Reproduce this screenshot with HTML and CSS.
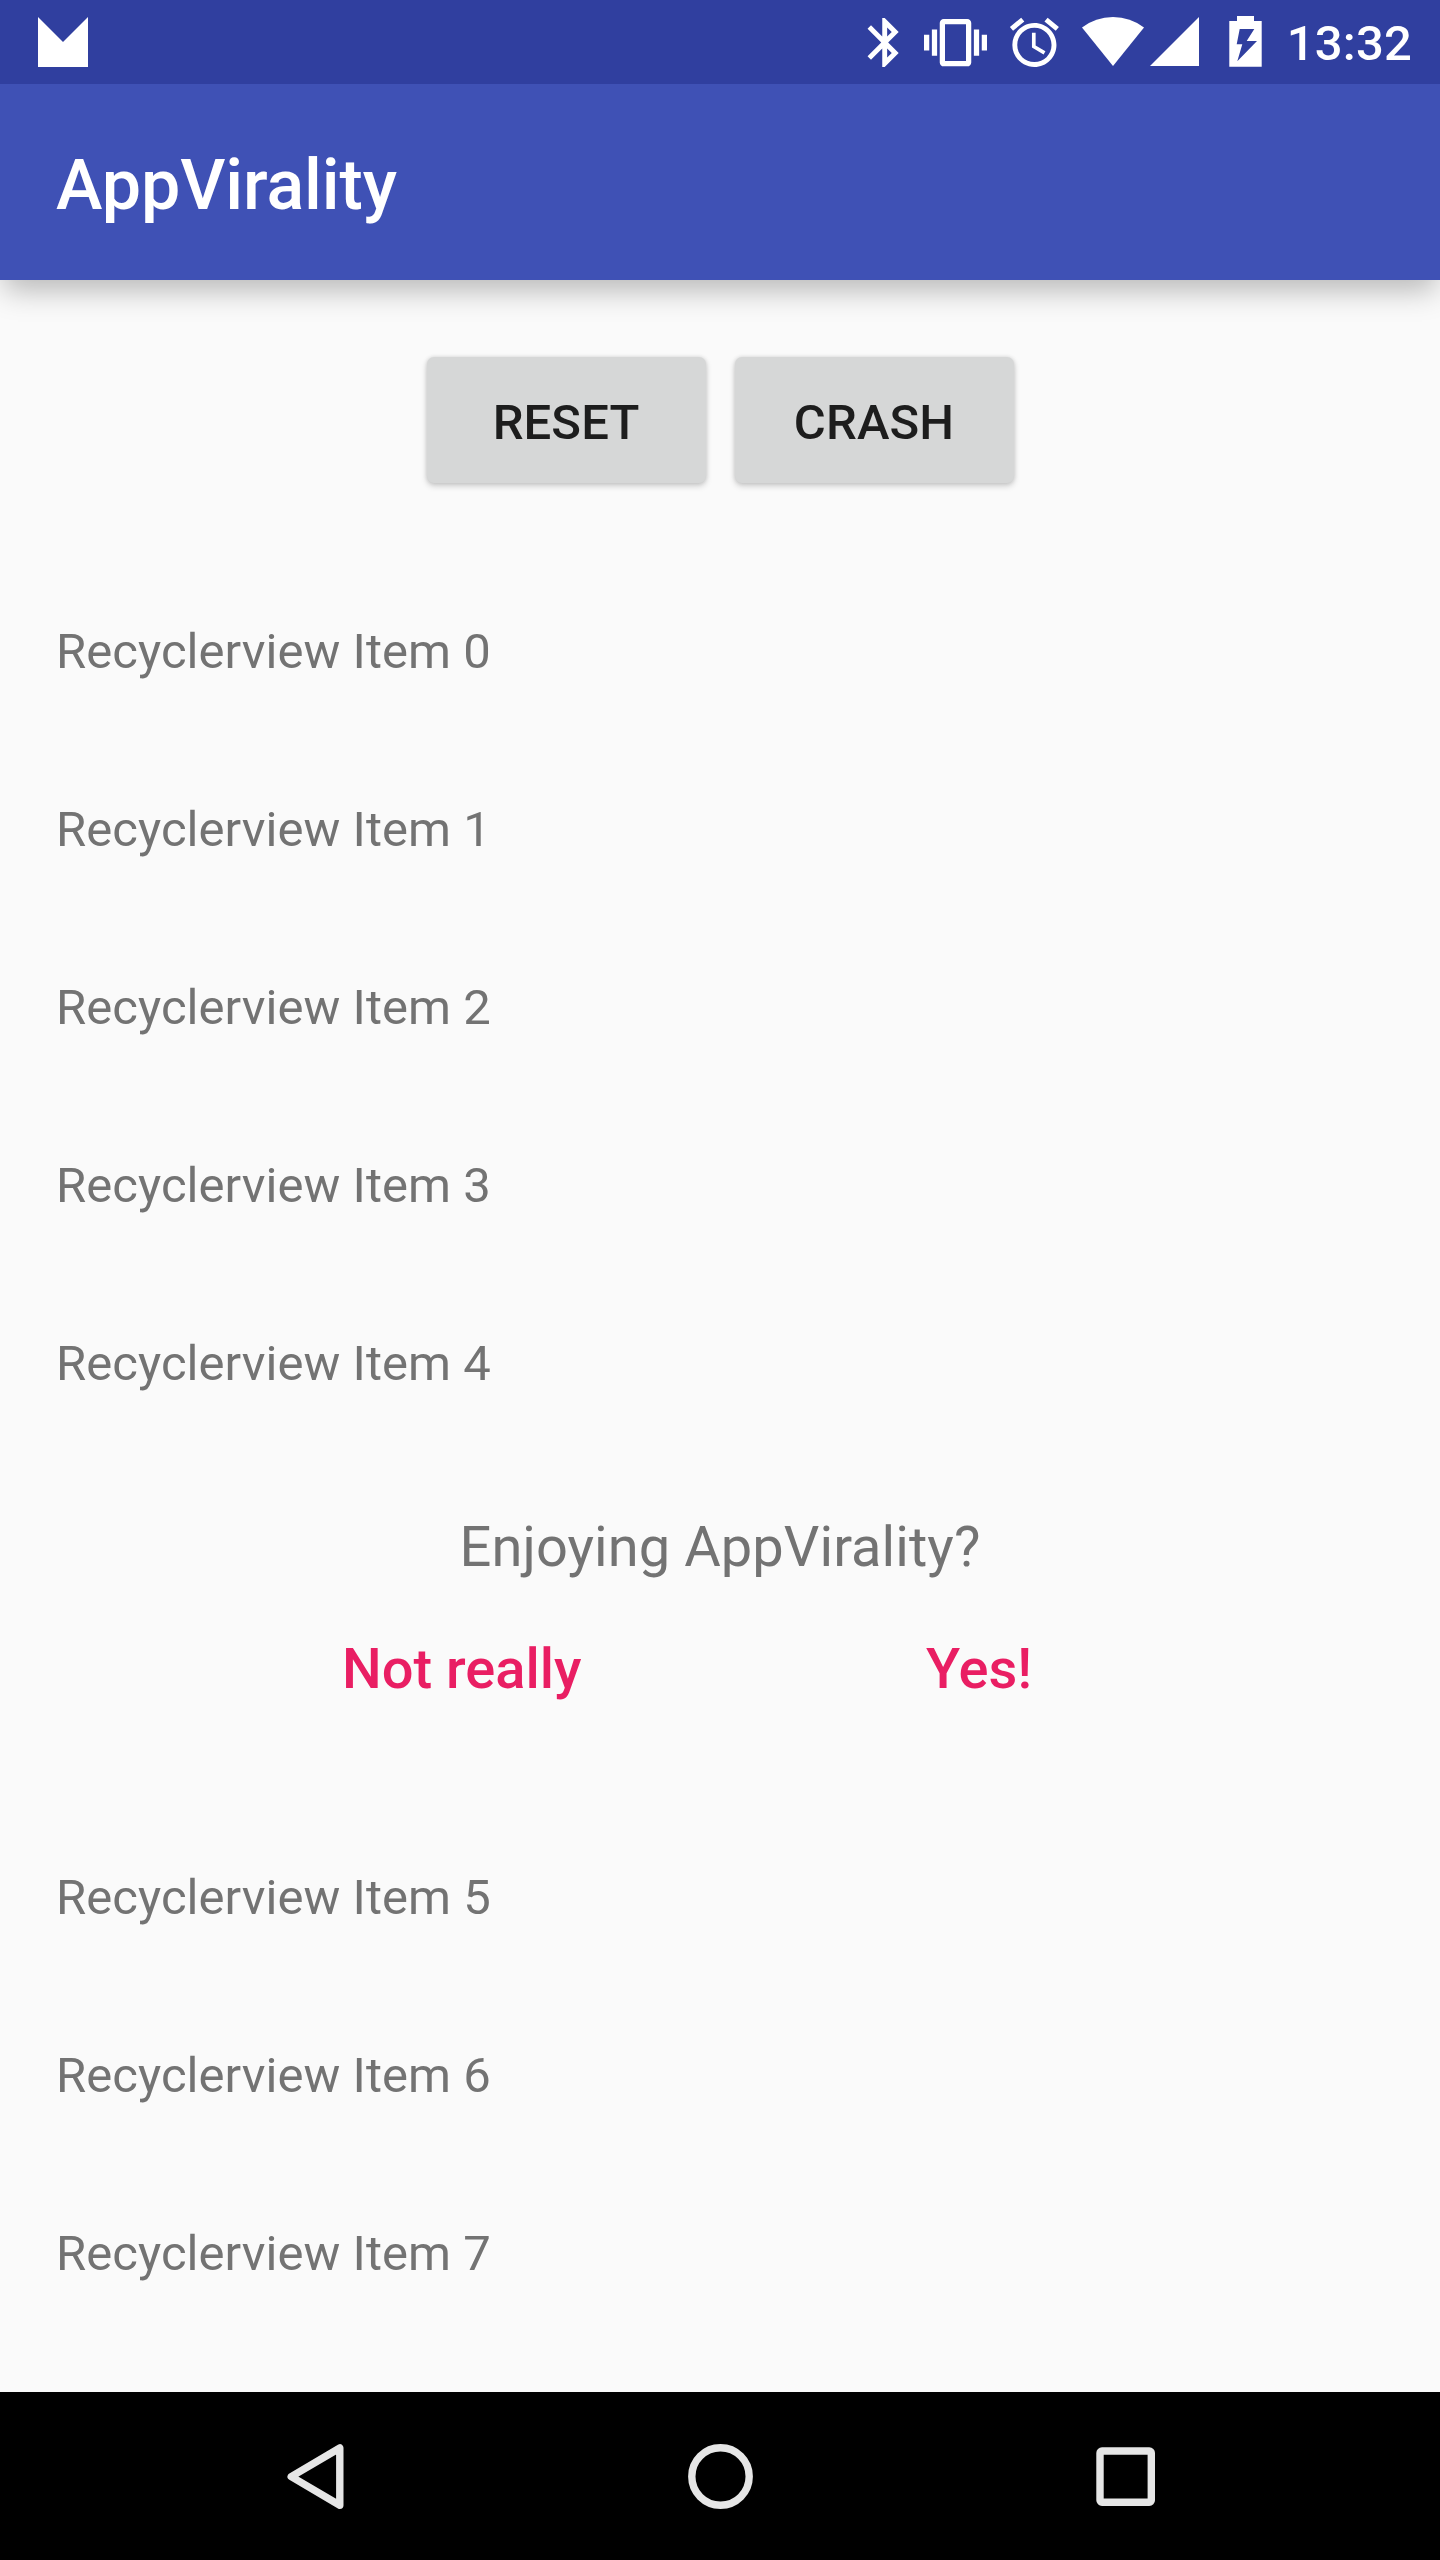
FILE: index.html
```html
<!DOCTYPE html>
<html lang="en">
<head>
<meta charset="utf-8">
<title>AppVirality</title>
<link rel="stylesheet" href="styles.css">
</head>
<body>
<div class="screen">
  <div class="status-bar">
    <svg class="mail" width="50" height="50" viewBox="0 0 50 50"><path d="M0 0L25 25L50 0V50H0Z"/></svg>
    <div class="status-icons">
      <svg width="50" height="84" viewBox="860 0 50 84"><path transform="translate(855.3 13.1) scale(2.45)" d="M17.71 7.71L12 2h-1v7.59L6.41 5 5 6.41 10.59 12 5 17.59 6.41 19 11 14.41V22h1l5.71-5.71-4.3-4.29 4.3-4.29zM13 5.83l1.88 1.88L13 9.59V5.83zm1.88 10.46L13 18.17v-3.76l1.88 1.88z"/></svg>
      <svg width="90" height="84" viewBox="910 0 90 84"><path transform="translate(924 11.2) scale(2.625)" d="M0 15h2V9H0v6zm3 2h2V7H3v10zm19-8v6h2V9h-2zm-3 8h2V7h-2v10zM16.5 3h-9C6.67 3 6 3.67 6 4.5v15c0 .83.67 1.5 1.5 1.5h9c.83 0 1.5-.67 1.5-1.5v-15c0-.83-.67-1.5-1.5-1.5zM16 19H8V5h8v14z"/></svg>
      <svg width="70" height="84" viewBox="1000 0 70 84"><path transform="translate(1005 13.1) scale(2.45)" d="M22 5.72l-4.6-3.86-1.29 1.53 4.6 3.86L22 5.72zM7.88 3.39L6.6 1.86 2 5.71l1.29 1.53 4.59-3.85zM12.5 8H11v6l4.75 2.85.75-1.23-4-2.37V8zM12 4c-4.97 0-9 4.03-9 9s4.02 9 9 9c4.97 0 9-4.03 9-9s-4.03-9-9-9zm0 16c-3.87 0-7-3.13-7-7s3.13-7 7-7 7 3.13 7 7-3.13 7-7 7z"/></svg>
      <svg width="77" height="84" viewBox="1070 0 77 84"><path d="M1113 66L1082 27.6Q1095.500 17 1113 17T1144 27.600Z"/></svg>
      <svg width="73" height="84" viewBox="1147 0 73 84"><path d="M1150 66L1199 17V66Z"/></svg>
      <svg width="50" height="84" viewBox="1220 0 50 84"><path fill-rule="evenodd" d="M1237 16H1254V21H1261.700V66.700H1229.300V21H1237ZM1239.700 29L1236.700 44.300H1242.300L1237.300 61.300L1257 41H1246.700L1254.300 29Z"/></svg>
    </div>
    <span class="clock">13:32</span>
  </div>
  <header class="app-bar"><h1>AppVirality</h1></header>
  <main>
    <div class="actions">
      <button type="button">RESET</button>
      <button type="button">CRASH</button>
    </div>
    <div class="list">
      <div class="item">Recyclerview Item 0</div>
      <div class="item">Recyclerview Item 1</div>
      <div class="item">Recyclerview Item 2</div>
      <div class="item">Recyclerview Item 3</div>
      <div class="item">Recyclerview Item 4</div>
      <section class="prompt">
        <p>Enjoying AppVirality?</p>
        <div class="answers"><a class="no">Not really</a><a>Yes!</a></div>
      </section>
      <div class="item">Recyclerview Item 5</div>
      <div class="item">Recyclerview Item 6</div>
      <div class="item">Recyclerview Item 7</div>
    </div>
  </main>
  <nav class="nav-bar">
    <svg width="405" height="168" viewBox="113 2392 405 168"><path d="M339.800 2448V2505.200L291.200 2476.600Z"/></svg>
    <svg width="405" height="168" viewBox="518 2392 405 168"><circle cx="720.500" cy="2476.500" r="28.700"/></svg>
    <svg width="405" height="168" viewBox="923 2392 405 168"><rect x="1100" y="2451" width="51.300" height="51.300" rx="2"/></svg>
  </nav>
</div>
</body>
</html>
```
FILE: styles.css
```css
* { box-sizing: border-box; }

body {
  margin: 0;
  font-family: Roboto, sans-serif;
  background: #fafafa;
}

.screen {
  width: 1440px;
  height: 2560px;
  display: flex;
  flex-direction: column;
  overflow: hidden;
}

.status-bar {
  height: 84px;
  flex: none;
  display: flex;
  align-items: center;
  padding: 0 28px 0 38px;
  background: #303f9f;
  color: #fff;
  position: relative;
  z-index: 1;
}
.status-bar svg { fill: #fff; flex: none; }
.status-icons { display: flex; margin-left: auto; }
.clock {
  width: 142px;
  text-align: right;
  font-size: 49px;
  font-weight: 500;
  line-height: 84px;
  padding-top: 4px;
  letter-spacing: .2px;
}

.app-bar {
  height: 196px;
  flex: none;
  display: flex;
  align-items: center;
  padding: 6px 56px 0;
  background: #3f51b5;
  box-shadow: 0 14px 28px -4px rgba(0, 0, 0, .27);
}
.app-bar h1 {
  margin: 0;
  color: #fff;
  font-size: 70px;
  font-weight: 500;
  line-height: 82px;
  letter-spacing: -.1px;
}

main { flex: 1; }

.actions {
  height: 282px;
  display: flex;
  justify-content: center;
  align-items: flex-start;
  gap: 29px;
  padding-top: 77px;
}
.actions button {
  width: 279px;
  height: 126px;
  border: 0;
  border-radius: 7px;
  padding: 4px 0 0;
  background: #d6d7d7;
  box-shadow: 0 3px 6px rgba(0, 0, 0, .18), 0 0 4px rgba(0, 0, 0, .12);
  color: #1d1d1d;
  font: 500 49px Roboto, sans-serif;
  letter-spacing: .1px;
}

.item {
  height: 178px;
  padding-left: 56px;
  font-size: 49px;
  line-height: 180px;
  letter-spacing: .05px;
  color: #737373;
}

.prompt {
  height: 356px;
  padding-top: 62px;
  font-size: 56px;
  line-height: 66px;
  color: #737373;
}
.prompt p { margin: 0; text-align: center; letter-spacing: .06px; }
.answers {
  display: flex;
  padding: 56px 0 0 342px;
  color: #e91e63;
  font-weight: 500;
}
.answers .no { width: 584px; }

.nav-bar {
  height: 168px;
  flex: none;
  display: flex;
  justify-content: center;
  background: #000;
}
.nav-bar svg {
  fill: none;
  stroke: #e6e6e6;
  stroke-width: 7.4;
  stroke-linejoin: round;
}
```
